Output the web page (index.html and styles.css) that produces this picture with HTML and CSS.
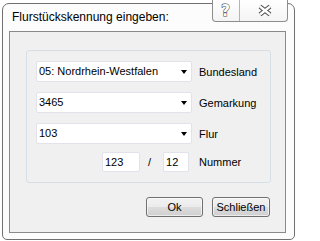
FILE: index.html
```html
<!DOCTYPE html>
<html>
<head>
<meta charset="utf-8">
<link rel="stylesheet" href="styles.css">
</head>
<body>
<div class="window">
  <div class="titlebar"><span class="title">Flurstückskennung eingeben:</span></div>
  <div class="caption">
    <div class="cbtn help">
      <svg width="26" height="21" viewBox="0 0 26 21"><text x="12.5" y="16" text-anchor="middle" class="qmark">?</text></svg>
    </div>
    <div class="cbtn close">
      <svg width="47" height="21" viewBox="0 0 47 21">
        <path d="M20 6.5 L30 14.5 M30 6.5 L20 14.5" class="xo"/>
        <path d="M20 6.5 L30 14.5 M30 6.5 L20 14.5" class="xi"/>
      </svg>
    </div>
  </div>
  <div class="client">
    <div class="group">
      <div class="row">
        <div class="combo"><span class="val">05: Nordrhein-Westfalen</span><span class="arrow"></span></div>
        <span class="label">Bundesland</span>
      </div>
      <div class="row">
        <div class="combo"><span class="val">3465</span><span class="arrow"></span></div>
        <span class="label">Gemarkung</span>
      </div>
      <div class="row">
        <div class="combo"><span class="val">103</span><span class="arrow"></span></div>
        <span class="label">Flur</span>
      </div>
      <div class="row numrow">
        <div class="edit e1">123</div>
        <span class="slash">/</span>
        <div class="edit e2">12</div>
        <span class="label lnum">Nummer</span>
      </div>
    </div>
    <div class="buttons">
      <div class="btn b-ok">Ok</div>
      <div class="btn b-close">Schließen</div>
    </div>
  </div>
</div>
</body>
</html>
```
FILE: styles.css
```css
html, body {
  margin: 0;
  padding: 0;
  background: #ffffff;
}
body {
  width: 296px;
  height: 241px;
  overflow: hidden;
  font-family: "Liberation Sans", Arial, sans-serif;
  font-size: 11px;
  color: #000;
}
.window {
  position: relative;
  box-sizing: border-box;
  margin: 3px 0 0 2px;
  width: 293px;
  height: 237px;
  border: 1px solid #707070;
  border-radius: 7px 7px 5px 5px;
  background: #fcfcfc;
  padding: 0 8px 6px 6px;
}
.titlebar {
  height: 27px;
  box-sizing: border-box;
  padding: 6px 0 0 3px;
}
.title {
  font-size: 12px;
  line-height: 15px;
  color: #000;
}
.caption {
  position: absolute;
  top: -4px;
  left: 209px;
  display: flex;
  height: 22px;
  box-sizing: border-box;
  border: 1px solid #8d8d8d;
  border-top: none;
  border-radius: 0 0 4px 4px;
  background: linear-gradient(#ffffff, #f4f4f4);
}
.cbtn {
  height: 21px;
  display: flex;
}
.help {
  width: 26px;
  border-right: 1px solid #b4b4b4;
}
.close {
  width: 47px;
}
.qmark {
  font-family: "DejaVu Sans", sans-serif;
  font-weight: bold;
  font-size: 15px;
  fill: #ffffff;
  stroke: #4a4a4a;
  stroke-width: 1.1px;
  paint-order: stroke;
}
.xo {
  stroke: #4a4a4a;
  stroke-width: 4.4px;
  fill: none;
}
.xi {
  stroke: #ffffff;
  stroke-width: 2.4px;
  fill: none;
}
.client {
  box-sizing: border-box;
  width: 277px;
  height: 202px;
  border: 1px solid #8a8a8a;
  background: #f0f0f0;
  padding: 18px 0 0 16px;
}
.group {
  box-sizing: border-box;
  width: 245px;
  height: 133px;
  border: 1px solid #d5dfe5;
  border-radius: 3px;
  padding: 10px 0 0 9px;
  display: flex;
  flex-direction: column;
  gap: 10px;
}
.row {
  display: flex;
  align-items: center;
}
.combo {
  box-sizing: border-box;
  width: 156px;
  height: 21px;
  background: #ffffff;
  border: 1px solid #e2e3ea;
  border-radius: 2px;
  display: flex;
  align-items: center;
  justify-content: space-between;
  padding: 0 4px 0 2px;
}
.val {
  line-height: 13px;
}
.arrow {
  width: 0;
  height: 0;
  border-left: 3.5px solid transparent;
  border-right: 3.5px solid transparent;
  border-top: 4px solid #000;
  margin-right: 0;
}
.label {
  margin-left: 7px;
}
.numrow {
  margin-top: -2px;
}
.edit {
  box-sizing: border-box;
  height: 20px;
  background: #ffffff;
  border: 1px solid #e2e3ea;
  border-radius: 2px;
  padding: 0 0 0 2px;
  display: flex;
  align-items: center;
}
.e1 {
  width: 38px;
  margin-left: 66px;
}
.e2 {
  width: 26px;
}
.slash {
  margin: 0 12px 0 8px;
}
.lnum {
  margin-left: 10px;
}
.buttons {
  width: 244px;
  margin-top: 14px;
  display: flex;
  justify-content: flex-end;
  gap: 9px;
}
.btn {
  box-sizing: border-box;
  height: 20px;
  border: 1px solid #707070;
  border-radius: 3px;
  background: linear-gradient(#f2f2f2 0%, #ebebeb 50%, #dddddd 51%, #cfcfcf 100%);
  display: flex;
  align-items: center;
  justify-content: center;
  box-shadow: inset 0 0 0 1px rgba(255,255,255,0.6);
}
.b-ok {
  width: 57px;
}
.b-close {
  width: 58px;
}
```
